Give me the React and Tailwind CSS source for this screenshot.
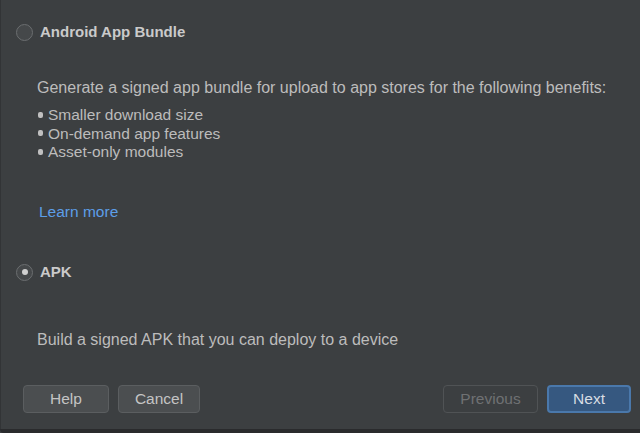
import React from 'react';

function Radio({ checked }) {
  return (
    <span className="flex h-[17px] w-[17px] items-center justify-center rounded-full border border-[#6b6e70] bg-[#45484a]">
      {checked && <span className="h-[6px] w-[6px] rounded-full bg-[#d0d0d0]" />}
    </span>
  );
}

function Bullet({ children }) {
  return (
    <li className="flex items-center h-[18.5px]">
      <span className="mr-[5px] h-[6px] w-[5px] rounded-[2px] bg-[#c0c0c0]" />
      {children}
    </li>
  );
}

export default function App() {
  return (
    <div
      className="flex h-[433px] w-[640px] flex-col bg-[#3c3f41] text-[16px] text-[#bcbcbc]"
      style={{ fontFamily: '"Liberation Sans", Arial, sans-serif' }}
    >
      <div className="flex flex-1 flex-col border-l border-[#323436]">
        {/* App bundle option */}
        <div className="flex items-center gap-[7px] pl-[15px] pt-[21px]">
          <Radio />
          <span className="text-[15px] font-bold text-[#cacaca]">Android App Bundle</span>
        </div>

        <div className="pl-[36px] pt-[34px]">
          <p className="leading-[19px]">Generate a signed app bundle for upload to app stores for the following benefits:</p>
          <ul className="mt-[9px] pl-[1px] text-[15.5px]">
            <Bullet>Smaller download size</Bullet>
            <Bullet>On-demand app features</Bullet>
            <Bullet>Asset-only modules</Bullet>
          </ul>
          <a className="mt-[41px] ml-[2px] block text-[15.5px] leading-[19px] text-[#5d9ee8]">Learn more</a>
        </div>

        {/* APK option */}
        <div className="flex items-center gap-[7px] pl-[15px] pt-[40px]">
          <Radio checked />
          <span className="text-[15px] font-bold text-[#cacaca]">APK</span>
        </div>

        <p className="pl-[36px] pt-[46px] leading-[19px]">Build a signed APK that you can deploy to a device</p>

        {/* Footer buttons */}
        <div className="mt-auto flex items-center pl-[22px] pr-[9px] pb-[16px] text-[15.5px]">
          <button className="h-[28px] w-[86px] rounded-[4px] border border-[#5b5e60] bg-[#4b4e50] text-[#c4c4c4]">Help</button>
          <button className="ml-[9px] h-[28px] w-[82px] rounded-[4px] border border-[#5b5e60] bg-[#4b4e50] text-[#c4c4c4]">Cancel</button>
          <button className="ml-auto h-[28px] w-[95px] rounded-[4px] border border-[#505355] bg-[#3c3f41] text-[#6f7173]">Previous</button>
          <button className="ml-[9px] h-[28px] w-[84px] rounded-[4px] border-2 border-[#4a78ab] bg-[#365880] text-[#d8dde3]">Next</button>
        </div>
      </div>
      <div className="h-[4px] rounded-bl-[6px] bg-[#2a2b2d]" />
    </div>
  );
}
